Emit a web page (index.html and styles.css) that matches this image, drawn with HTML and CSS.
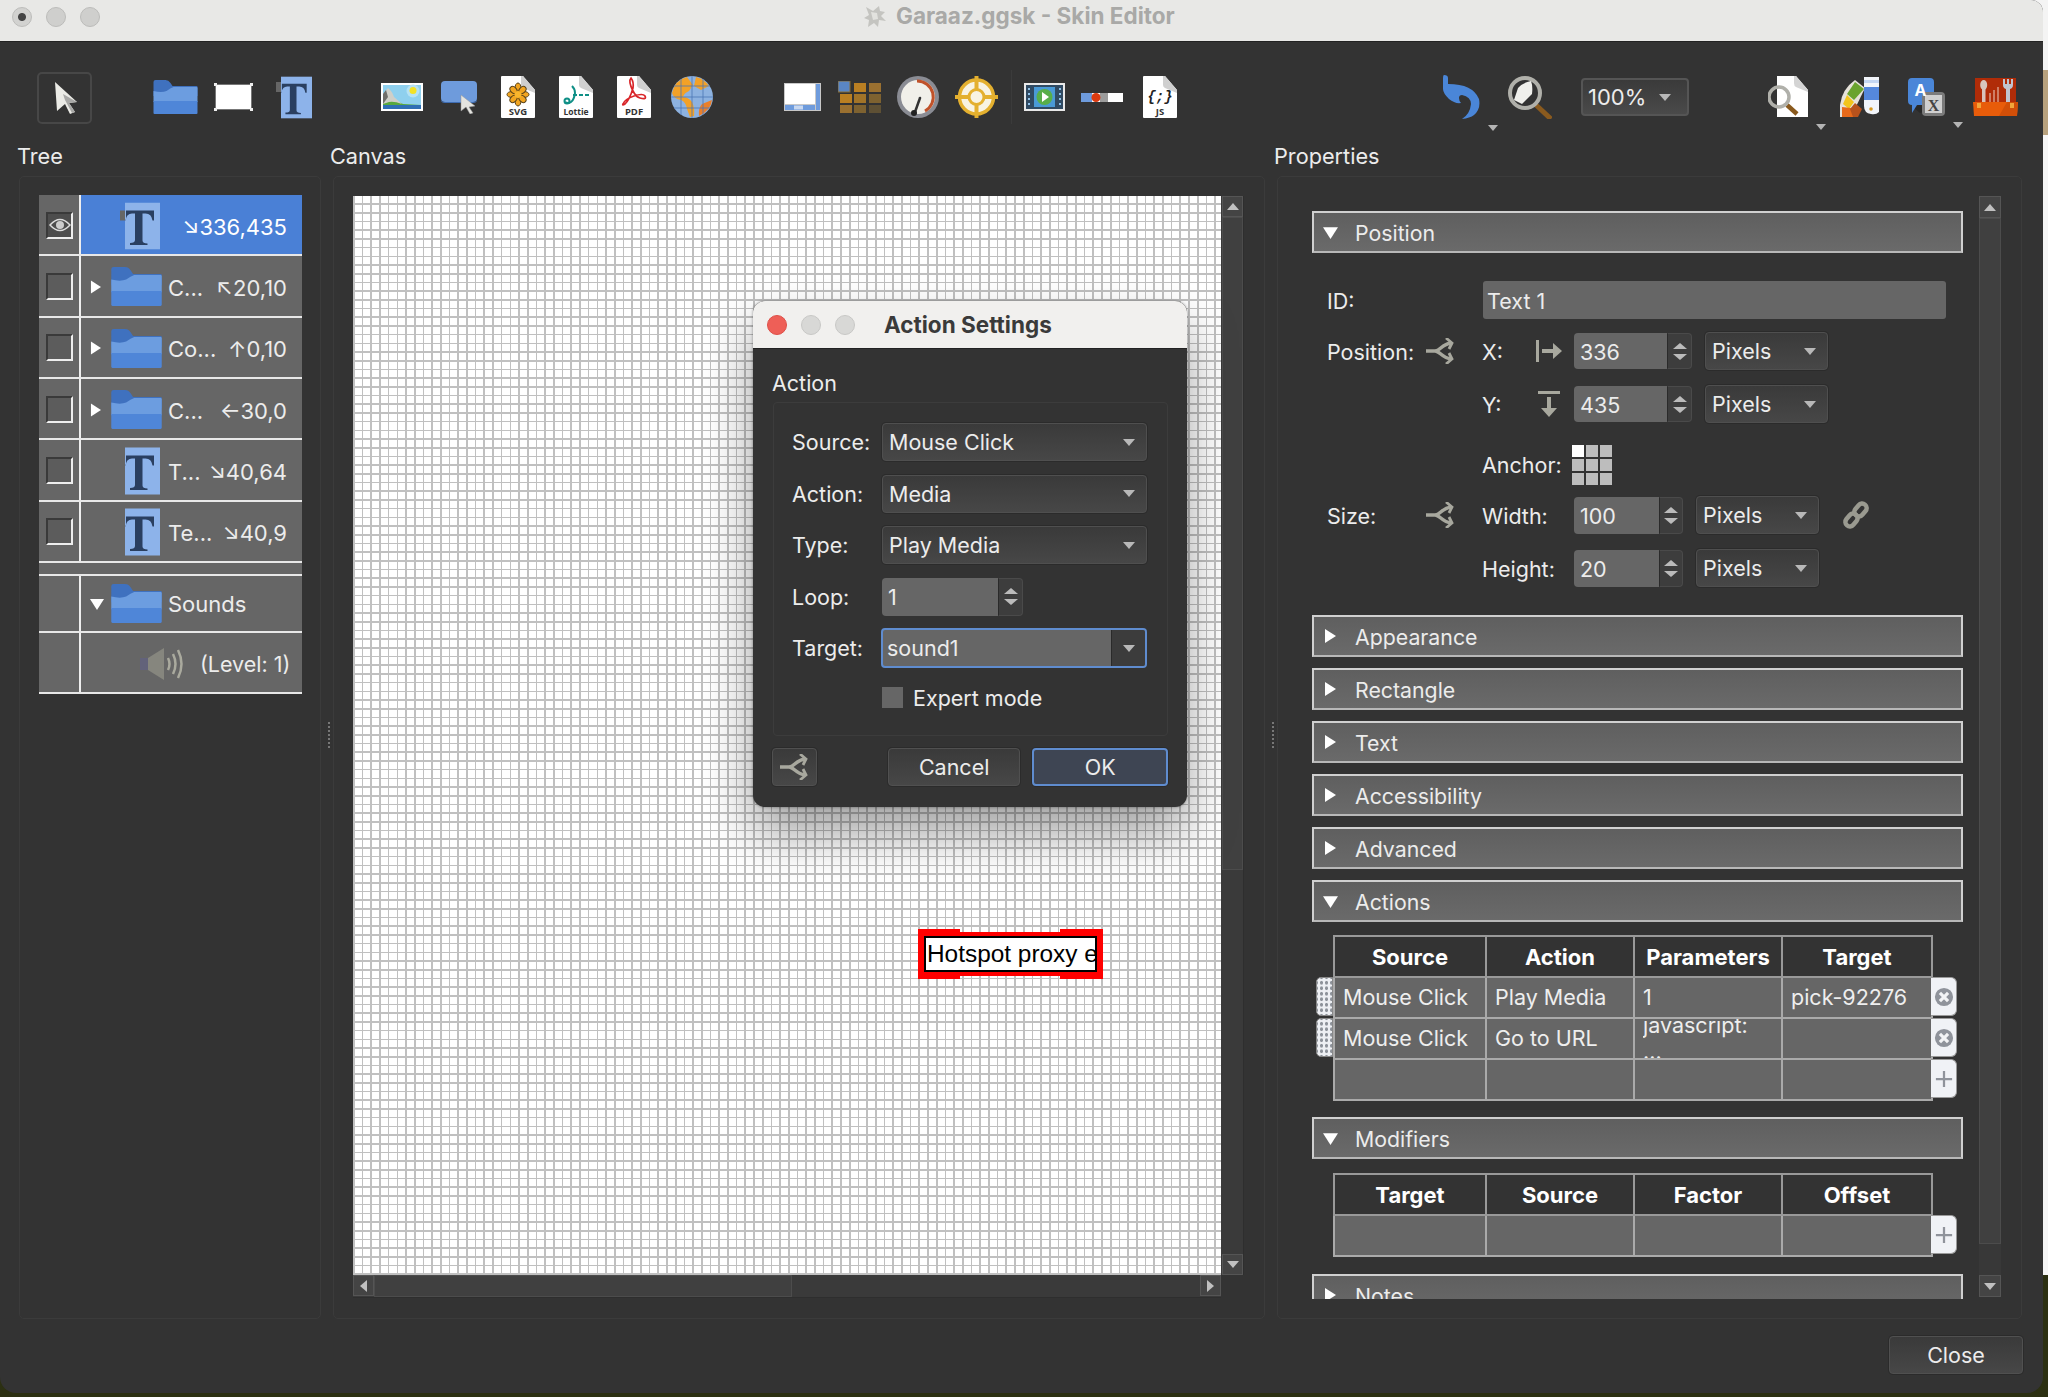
FILE: index.html
```html
<!DOCTYPE html>
<html lang="en">
<head>
<meta charset="utf-8">
<title>Garaaz.ggsk - Skin Editor</title>
<link rel="stylesheet" href="styles.css">
</head>
<body>
<svg class="defs" xmlns="http://www.w3.org/2000/svg">
  <symbol id="i-folder" viewBox="0 0 44 34">
    <path fill="#3f71bf" d="M0 2Q0 0 2 0h10q3 0 5 3l2 3h24q1 0 1 1v9H0z"/>
    <path fill="#6c9de0" d="M0 11q8 2 13 0 4-3 7-4h23q1 0 1 1v14H0z"/>
    <path fill="#4f86d8" d="M0 21h44v12q0 1-1 1H1q-1 0-1-1z"/>
  </symbol>
  <symbol id="i-text" viewBox="0 0 35 47">
    <rect width="35" height="47" fill="#8db3ea"/>
    <path fill="#2a3f60" d="M1 8h28v10h-1.500q-1-7-7-7h-3v27q0 3 5 3v1.500H5V40.500q5 0 5-3V11H7q-5.500 0-6.500 7H1z"/>
  </symbol>
  <symbol id="i-shuffle" viewBox="0 0 28 26">
    <path fill="none" stroke="#a8a89e" stroke-width="3.500" stroke-linejoin="round" d="M0 13h9C14 13 16 6 25 5M9 13C14 13 16 20 25 21"/>
    <path fill="none" stroke="#a8a89e" stroke-width="2.800" d="M20 0l6 5-3 6M20 26l6-5-3-6"/>
  </symbol>
  <symbol id="i-tri-right" viewBox="0 0 12 14"><path fill="#fff" d="M1 0l11 7-11 7z"/></symbol>
  <symbol id="i-tri-down" viewBox="0 0 14 12"><path fill="#fff" d="M0 1h14L7 12z"/></symbol>
  <symbol id="i-remove" viewBox="0 0 22 22">
    <circle cx="11" cy="11" r="10" fill="#8f939b"/>
    <path stroke="#f2f3f5" stroke-width="3.500" d="M6.500 6.500l9 9M15.500 6.500l-9 9"/>
  </symbol>
  <symbol id="i-plus" viewBox="0 0 20 20"><path stroke="#8f939b" stroke-width="2.500" d="M10 1v18M1 10h18"/></symbol>
  <symbol id="i-page" viewBox="0 0 34 42">
    <path fill="#fff" d="M1 0h21l12 14v27q0 1-1 1H1q-1 0-1-1V1q0-1 1-1z"/>
    <path fill="#cfcfcf" d="M20 0h2l12 14v3L22 12q-2-1-2-3z"/>
  </symbol>
</svg>

<div class="window">
  <header class="titlebar">
    <span class="light light-dot"></span>
    <span class="light"></span>
    <span class="light"></span>
    <div class="win-title">
      <svg class="win-icon" viewBox="0 0 24 24"><path fill="#c4c4c0" d="M3 3l7 4 6-5 1 5 5 1-4 4 5 5-7-1-1 7-4-4-6 4 1-7-5-2 5-3z"/><path fill="#e2e2de" d="M8 8l6 1 1 6-5 1z"/></svg>
      <span>Garaaz.ggsk - Skin Editor</span>
    </div>
  </header>

  <div class="toolbar">
    <button class="pointer-tool">
      <svg width="24" height="32" viewBox="0 0 24 32"><path fill="#ebebe6" d="M1 0l22 20-8 1 6 9-5 2-5-10-8 7z"/><path fill="#a8a8a6" d="M9 12l14 8-8 1 6 9-3 1-7-13z"/></svg>
    </button>
    <svg class="t-folder"><use href="#i-folder"/></svg>
    <svg class="t-rect" viewBox="0 0 39 28">
      <rect x="1.500" y="1.500" width="36" height="25" fill="#fff" stroke="#777" rx="1"/>
      <path fill="#eee" d="M0 0h3v3H0zM36 0h3v3h-3zM0 25h3v3H0zM36 25h3v3h-3z"/>
    </svg>
    <svg class="t-text" viewBox="0 0 36 43"><rect y="6" width="6" height="10" fill="#666"/><use href="#i-text" x="5" width="31" height="43"/></svg>
    <svg class="t-image" viewBox="0 0 42 28">
      <rect width="42" height="28" fill="#fff"/>
      <rect x="2" y="2" width="38" height="24" fill="#8fd0ee"/>
      <circle cx="32" cy="8" r="6.500" fill="#b6e2f4"/><circle cx="32" cy="7.500" r="3.500" fill="#f4e224"/>
      <path fill="#58a83e" d="M2 17q10-1 20 4l18 1v2H2z"/>
      <path fill="#cfcfc8" d="M2 21V11l5-6q4 3 6 9l8 7q-8-3-13-2z"/>
      <path fill="#6e6e6a" d="M2 21V11l3-4 2 7z"/>
      <path fill="#2f6fb4" d="M2 22h38v4H2z"/>
    </svg>
    <svg class="t-hotspot" viewBox="0 0 38 33">
      <rect width="36" height="21" rx="4" fill="#6e9bdc"/><path fill="#3f6db3" d="M0 18q0 3 4 3h28q4 0 4-3v1q0 3-4 3H4q-4 0-4-3z"/>
      <path fill="#e4e4e0" stroke="#999" stroke-width=".5" d="M20 14l14 11-6 1 4 6-3 1-4-7-5 4z"/>
    </svg>
    <svg class="t-doc" viewBox="0 0 34 42"><use href="#i-page" width="34" height="42"/>
      <g fill="#f2a521" stroke="#57421a" stroke-width="1"><ellipse cx="17" cy="12" rx="3" ry="5"/><ellipse cx="17" cy="25" rx="3" ry="5"/><ellipse cx="11" cy="18.500" rx="5" ry="3"/><ellipse cx="23" cy="18.500" rx="5" ry="3"/><ellipse cx="12.500" cy="14" rx="3" ry="4" transform="rotate(-45 12.500 14)"/><ellipse cx="21.500" cy="14" rx="3" ry="4" transform="rotate(45 21.500 14)"/><ellipse cx="12.500" cy="23" rx="3" ry="4" transform="rotate(45 12.500 23)"/><ellipse cx="21.500" cy="23" rx="3" ry="4" transform="rotate(-45 21.500 23)"/></g>
      <circle cx="17" cy="18.500" r="3.500" fill="#f9b52c"/>
      <text class="doc-label" x="17" y="39">SVG</text>
    </svg>
    <svg class="t-doc t-gap" viewBox="0 0 34 42"><use href="#i-page" width="34" height="42"/>
      <path fill="none" stroke="#0f8f86" stroke-width="2" d="M6 26q3 2 6 0t4-9q0-4-3-7"/><path fill="none" stroke="#0f8f86" stroke-width="2" stroke-dasharray="4 2" d="M14 19h16"/><circle cx="8" cy="25" r="2.500" fill="none" stroke="#0f8f86" stroke-width="2"/>
      <text class="doc-label doc-label-sm" x="17" y="39">Lottie</text>
    </svg>
    <svg class="t-doc t-gap" viewBox="0 0 34 42"><use href="#i-page" width="34" height="42"/>
      <path fill="none" stroke="#d9262a" stroke-width="1.700" d="M14 2q-3 3 2 13 3 6 7 7 7 2 5-2-2-3-11 0-9 3-11 8-1 2 2 0 5-5 8-16 1-6-2-10z"/>
      <text class="doc-label" x="17" y="39">PDF</text>
    </svg>
    <svg class="t-globe" viewBox="0 0 42 42">
      <circle cx="21" cy="21" r="21" fill="#8db2e0"/>
      <path fill="#f2a127" d="M16 1Q4 4 1 17q2 6 9 7 5 2 6 9l3 8 4-1q1-8-2-14-4-5-9-5 1-4 6-6l4-6z"/>
      <path fill="#ea7f2a" d="M41 24q-1 10-13 16-1-8 3-12z"/><path fill="#f2a127" d="M25 1q8 2 13 9l-8 4-7-4z"/>
      <path fill="none" stroke="#4b77b5" stroke-width="1" d="M21 0v42M10 3v36M32 3v36M3 10h36M0 21h42M3 32h36" opacity=".8"/>
    </svg>
    <svg class="t-scroll" viewBox="0 0 37 28">
      <rect width="37" height="28" fill="#c8c8c8"/><rect x="1" y="1" width="30" height="20" fill="#fff"/>
      <rect x="32" y="1" width="4" height="26" fill="#6e9bdc"/><rect x="1" y="22" width="30" height="5" fill="#6e9bdc"/><rect x="10" y="22.500" width="9" height="4" fill="#c8d8f0"/>
    </svg>
    <svg class="t-grid" viewBox="0 0 43 32">
      <rect x="0" y="0" width="12" height="11" fill="#5a86c4" stroke="#8a6d32"/><rect x="16" y="2" width="12" height="9" fill="#ba7f22"/><rect x="31" y="2" width="12" height="9" fill="#9a7030"/>
      <rect x="2" y="13" width="12" height="9" fill="#ba7f22"/><rect x="16" y="13" width="12" height="9" fill="#a27428"/><rect x="31" y="13" width="12" height="9" fill="#7e6230"/>
      <rect x="2" y="24" width="12" height="8" fill="#9a7030"/><rect x="16" y="24" width="12" height="8" fill="#7e6230"/><rect x="31" y="24" width="12" height="8" fill="#5e5034"/>
    </svg>
    <svg class="t-gauge" viewBox="0 0 42 42">
      <circle cx="21" cy="21" r="21" fill="#8a8c94"/><circle cx="21" cy="21" r="17" fill="#f1f0ea"/>
      <path fill="none" stroke="#c0522a" stroke-width="3" d="M20 5a16 16 0 0 1 8 30"/>
      <path stroke="#333" stroke-width="2.500" stroke-linecap="round" d="M18 36L23 22"/><circle cx="17" cy="37" r="3" fill="#222"/>
    </svg>
    <svg class="t-cross" viewBox="0 0 43 42">
      <circle cx="21.500" cy="21" r="17" fill="#f8f3e2" stroke="#e4b02f" stroke-width="3.500"/>
      <path fill="none" stroke="#e4b02f" stroke-width="4" d="M0 21h14M29 21h14M21.500 0v14M21.500 28v14"/>
      <circle cx="21.500" cy="21" r="7.500" fill="#f8f3e2" stroke="#e4b02f" stroke-width="3"/>
    </svg>
    <span class="tool-sep"></span>
    <svg class="t-video" viewBox="0 0 41 28">
      <rect width="41" height="28" fill="#e9e9e9"/><rect x="2" y="2" width="37" height="24" fill="#304a62"/>
      <path fill="#8ec0e8" d="M4 5h2v2H4zM4 10h2v2H4zM4 15h2v2H4zM4 20h2v2H4zM35 5h2v2h-2zM35 10h2v2h-2zM35 15h2v2h-2zM35 20h2v2h-2z"/>
      <rect x="10" y="4" width="21" height="20" fill="#4a9ad6"/><circle cx="20.500" cy="14" r="8" fill="#58ae4a"/><path fill="#fff" d="M18 9l7 5-7 5z"/>
    </svg>
    <svg class="t-slider" viewBox="0 0 42 9">
      <rect width="42" height="9" fill="#fff"/><rect width="11" height="9" fill="#6e9bdc"/><rect x="19" width="8" height="9" fill="#9c9c9c"/><circle cx="15" cy="4.500" r="4.500" fill="#dc3a10"/>
    </svg>
    <svg class="t-doc t-js" viewBox="0 0 34 42"><use href="#i-page" width="34" height="42"/>
      <text class="doc-code" x="17" y="25">{;}</text>
      <text class="doc-label" x="17" y="39">JS</text>
    </svg>

    <div class="tool-wrap t-undo">
      <svg width="37" height="44" viewBox="0 0 37 44"><path fill="#4a86d8" d="M1 0q4 0 4 3v6Q30 9 36 24q2 10-5 16-4 3-12 4 8-5 9-15 0-7-9-9-3 0-3 3 0 3 2 5-6 1-12-4Q0 18 0 14V3q0-3 1-3z"/></svg>
      <span class="menu-caret"></span>
    </div>
    <svg class="t-lens" viewBox="0 0 44 43">
      <path stroke="#8a5a1e" stroke-width="5" d="M28 29l15 14"/>
      <circle cx="17" cy="17" r="15" fill="#333" stroke="#b0b0aa" stroke-width="4"/>
      <path fill="#f0f0ec" d="M6 24l4-12q4-5 13-7 2 5 1 13l-10 10z"/>
    </svg>
    <div class="zoom-select"><span>100%</span><i class="caret"></i></div>
    <div class="tool-wrap t-docsearch">
      <svg width="40" height="42" viewBox="0 0 40 42">
        <path fill="#fff" d="M9 0h19l12 14v27H9z"/><path fill="#d4d4d4" d="M26 0h2l12 14v2L28 11q-2-1-2-4z"/>
        <path stroke="#8a5a1e" stroke-width="4.500" d="M19 29l10 9"/><circle cx="11" cy="21" r="10" fill="none" stroke="#b0b0aa" stroke-width="3.500"/>
      </svg>
      <span class="menu-caret"></span>
    </div>
    <svg class="t-palette" viewBox="0 0 41 40">
      <path fill="#e6e2da" d="M1 40V28Q3 12 16 3l10 8-14 29z"/>
      <path fill="#6aa32e" d="M8 17L16 5l9 7-10 11z"/><path fill="#f2c51c" d="M4 27l4-9 7 7-5 7z"/><path fill="#e86a1a" d="M3 40v-10l9 1 3 9z"/><path fill="#b7521c" d="M11 32l5-6 7 6-4 8h-5z"/>
      <path fill="#f2f5fa" d="M25 0h15v35q-3 3-8 2-7-1-7-8z"/><rect x="25" y="10" width="15" height="13" fill="#5588dc"/><rect x="25" y="3" width="15" height="3" fill="#c4d6f2"/><circle cx="32" cy="32" r="1.800" fill="#d89a20"/>
    </svg>
    <div class="tool-wrap t-translate">
      <svg width="37" height="38" viewBox="0 0 37 38">
        <path fill="#222" d="M6 30l8-6 6 8-8 3z" opacity=".6"/>
        <path fill="#4a86d8" d="M4 0h18q4 0 4 4v19q0 4-4 4H9l-5 8v-8q-4 0-4-4V4q0-4 4-4z"/>
        <rect x="14" y="14" width="23" height="24" rx="4" fill="#7b7b7b"/><rect x="17" y="17" width="17" height="18" fill="#d0d0d0"/>
        <text class="trans-a" x="12.500" y="18">A</text><text class="trans-x" x="25.500" y="33">X</text>
      </svg>
      <span class="menu-caret"></span>
    </div>
    <svg class="t-toolbox" viewBox="0 0 45 38">
      <rect x="2" width="41" height="25" fill="#b02c08"/>
      <path fill="#e85c0a" d="M0 24h45l-1 14H1z"/><path fill="#d24f08" d="M26 38l8-14h11l-1 14z"/>
      <path fill="#f2a63a" d="M4 25h4v5H4zM37 25h4v5h-4z"/>
      <rect x="9" y="6" width="3.500" height="18" fill="#d8c4bc"/><ellipse cx="10.700" cy="7" rx="3.500" ry="5" fill="#d8c4bc"/>
      <path stroke="#d89a84" stroke-width="1.500" d="M17 24v-9M21 24v-12M25 24V9"/>
      <path fill="#c0c4d0" d="M30 1v6q0 3 3 4v13h4V11q3-1 3-4V1l-2 0v5h-2V1h-2v5h-2V1z"/>
    </svg>
  </div>

  <main class="workspace">
    <h2 class="pane-label pane-label-tree">Tree</h2>
    <h2 class="pane-label">Canvas</h2>
    <h2 class="pane-label">Properties</h2>

    <section class="panel panel-tree">
      <div class="tree">
        <div class="tree-row is-selected">
          <div class="tree-check"><span class="check check-eye">
            <svg width="22" height="14" viewBox="0 0 22 14"><path fill="none" stroke="#ddd" stroke-width="1.500" d="M1 7q10-11 20 0-10 11-20 0z"/><circle cx="11" cy="7" r="4" fill="#ccc"/></svg>
          </span></div>
          <div class="tree-main">
            <span class="tree-arrow"></span>
            <span class="tree-icon tree-icon-handle"><svg class="tree-t" viewBox="0 0 40 47"><rect y="8" width="6" height="10" fill="#666"/><use href="#i-text" x="5" width="35" height="47"/></svg></span>
            <span class="tree-pos tree-pos-strong">↘336,435</span>
          </div>
        </div>
        <div class="tree-row">
          <div class="tree-check"><span class="check"></span></div>
          <div class="tree-main">
            <span class="tree-arrow"><svg width="11" height="14"><use href="#i-tri-right"/></svg></span>
            <span class="tree-icon"><svg class="tree-folder"><use href="#i-folder"/></svg></span>
            <span class="tree-name">C...</span><span class="tree-pos">↖20,10</span>
          </div>
        </div>
        <div class="tree-row">
          <div class="tree-check"><span class="check"></span></div>
          <div class="tree-main">
            <span class="tree-arrow"><svg width="11" height="14"><use href="#i-tri-right"/></svg></span>
            <span class="tree-icon"><svg class="tree-folder"><use href="#i-folder"/></svg></span>
            <span class="tree-name">Co...</span><span class="tree-pos">↑0,10</span>
          </div>
        </div>
        <div class="tree-row">
          <div class="tree-check"><span class="check"></span></div>
          <div class="tree-main">
            <span class="tree-arrow"><svg width="11" height="14"><use href="#i-tri-right"/></svg></span>
            <span class="tree-icon"><svg class="tree-folder"><use href="#i-folder"/></svg></span>
            <span class="tree-name">C...</span><span class="tree-pos">←30,0</span>
          </div>
        </div>
        <div class="tree-row">
          <div class="tree-check"><span class="check"></span></div>
          <div class="tree-main">
            <span class="tree-arrow"></span>
            <span class="tree-icon tree-icon-text"><svg class="tree-t-plain"><use href="#i-text"/></svg></span>
            <span class="tree-name">T...</span><span class="tree-pos">↘40,64</span>
          </div>
        </div>
        <div class="tree-row">
          <div class="tree-check"><span class="check"></span></div>
          <div class="tree-main">
            <span class="tree-arrow"></span>
            <span class="tree-icon tree-icon-text"><svg class="tree-t-plain"><use href="#i-text"/></svg></span>
            <span class="tree-name">Te...</span><span class="tree-pos">↘40,9</span>
          </div>
        </div>
        <div class="tree-spacer"></div>
        <div class="tree-row tree-row-sounds">
          <div class="tree-check"></div>
          <div class="tree-main">
            <span class="tree-arrow"><svg width="14" height="12"><use href="#i-tri-down"/></svg></span>
            <span class="tree-icon"><svg class="tree-folder"><use href="#i-folder"/></svg></span>
            <span class="tree-name">Sounds</span>
          </div>
        </div>
        <div class="tree-row">
          <div class="tree-check"></div>
          <div class="tree-main tree-main-sound">
            <svg width="44" height="34" viewBox="0 0 44 34"><rect y="11" width="9" height="12" fill="#62627a"/><path fill="#86867e" d="M8 11l16-10v32L8 23z"/><path fill="none" stroke="#aaaa9e" stroke-width="2.500" d="M28 11q3 6 0 12M33 7q5 10 0 20M38 3q7 14 0 28"/></svg>
            <span class="tree-level">(Level: 1)</span>
          </div>
        </div>
      </div>
    </section>

    <section class="panel panel-canvas">
      <div class="canvas-area">
        <div class="canvas-surface">
          <div class="proxy"><div class="proxy-text">Hotspot proxy e</div></div>

          <div class="dialog">
            <div class="dialog-title">
              <span class="light light-red"></span><span class="light light-soft"></span><span class="light light-soft"></span>
              <strong>Action Settings</strong>
            </div>
            <div class="dialog-body">
              <div class="group-label">Action</div>
              <div class="group">
                <div class="form-row"><label>Source:</label><div class="select select-wide"><span>Mouse Click</span><i class="caret"></i></div></div>
                <div class="form-row"><label>Action:</label><div class="select select-wide"><span>Media</span><i class="caret"></i></div></div>
                <div class="form-row"><label>Type:</label><div class="select select-wide"><span>Play Media</span><i class="caret"></i></div></div>
                <div class="form-row"><label>Loop:</label><div class="spin spin-loop"><span class="spin-value">1</span><span class="stepper"><i class="up"></i><i class="down"></i></span></div></div>
                <div class="form-row"><label>Target:</label><div class="combo"><span class="combo-value">sound1</span><span class="combo-btn"><i class="caret"></i></span></div></div>
                <div class="form-row form-row-check"><label></label><span class="plain-check"></span><span>Expert mode</span></div>
              </div>
              <div class="dialog-buttons">
                <button class="btn btn-icon"><svg width="28" height="26"><use href="#i-shuffle"/></svg></button>
                <button class="btn btn-cancel">Cancel</button>
                <button class="btn btn-ok">OK</button>
              </div>
            </div>
          </div>
        </div>
        <div class="vscroll">
          <span class="sb-btn"><i class="up"></i></span>
          <span class="sb-thumb sb-thumb-canvas"></span>
          <span class="sb-fill"></span>
          <span class="sb-btn"><i class="down"></i></span>
        </div>
        <div class="hscroll">
          <span class="sb-btn"><i class="left"></i></span>
          <span class="sb-thumb sb-thumb-h"></span>
          <span class="sb-fill"></span>
          <span class="sb-btn"><i class="right"></i></span>
        </div>
      </div>
    </section>

    <section class="panel panel-props">
      <div class="props-scroll">
        <div class="sec"><svg width="15" height="13"><use href="#i-tri-down"/></svg><span>Position</span></div>
        <div class="pos-body">
          <div class="prop-row"><label class="l-main">ID:</label><span class="id-field">Text 1</span></div>
          <div class="prop-row pr-x">
            <label class="l-main">Position:</label>
            <svg class="shuffle"><use href="#i-shuffle"/></svg>
            <label class="l-sub">X:</label>
            <svg class="axis" viewBox="0 0 26 26"><path fill="#a8a89e" d="M0 2h3v22H0zM6 11h11V5l9 8-9 8v-6H6z"/></svg>
            <div class="spin spin-pos"><span class="spin-value">336</span><span class="stepper"><i class="up"></i><i class="down"></i></span></div>
            <div class="select select-unit"><span>Pixels</span><i class="caret"></i></div>
          </div>
          <div class="prop-row pr-y">
            <label class="l-main"></label>
            <span class="shuffle"></span>
            <label class="l-sub">Y:</label>
            <svg class="axis" viewBox="0 0 26 26"><path fill="#a8a89e" d="M2 0h22v3H2zM11 6v11H5l8 9 8-9h-6V6z"/></svg>
            <div class="spin spin-pos"><span class="spin-value">435</span><span class="stepper"><i class="up"></i><i class="down"></i></span></div>
            <div class="select select-unit"><span>Pixels</span><i class="caret"></i></div>
          </div>
          <div class="prop-row pr-anchor">
            <label class="l-main"></label>
            <span class="shuffle"></span>
            <label class="l-anchor">Anchor:</label>
            <div class="anchor"><i class="on"></i><i></i><i></i><i></i><i></i><i></i><i></i><i></i><i></i></div>
          </div>
          <div class="prop-row pr-size">
            <label class="l-main">Size:</label>
            <svg class="shuffle"><use href="#i-shuffle"/></svg>
            <label class="l-dim">Width:</label>
            <div class="spin spin-size"><span class="spin-value">100</span><span class="stepper"><i class="up"></i><i class="down"></i></span></div>
            <div class="select select-unit select-unit-size"><span>Pixels</span><i class="caret"></i></div>
            <svg class="link" viewBox="0 0 28 28"><g fill="none" stroke="#9a9a90" stroke-width="4.500"><rect x="14" y="2" width="9" height="14" rx="4.500" transform="rotate(40 18.500 9)"/><rect x="5" y="12" width="9" height="14" rx="4.500" transform="rotate(40 9.500 19)"/></g></svg>
          </div>
          <div class="prop-row pr-height">
            <label class="l-main"></label>
            <span class="shuffle"></span>
            <label class="l-dim">Height:</label>
            <div class="spin spin-size"><span class="spin-value">20</span><span class="stepper"><i class="up"></i><i class="down"></i></span></div>
            <div class="select select-unit select-unit-size"><span>Pixels</span><i class="caret"></i></div>
          </div>
        </div>
        <div class="sec sec-closed"><svg width="12" height="14"><use href="#i-tri-right"/></svg><span>Appearance</span></div>
        <div class="sec sec-closed"><svg width="12" height="14"><use href="#i-tri-right"/></svg><span>Rectangle</span></div>
        <div class="sec sec-closed"><svg width="12" height="14"><use href="#i-tri-right"/></svg><span>Text</span></div>
        <div class="sec sec-closed"><svg width="12" height="14"><use href="#i-tri-right"/></svg><span>Accessibility</span></div>
        <div class="sec sec-closed"><svg width="12" height="14"><use href="#i-tri-right"/></svg><span>Advanced</span></div>
        <div class="sec sec-actions"><svg width="15" height="13"><use href="#i-tri-down"/></svg><span>Actions</span></div>

        <div class="table-wrap table-actions">
          <table class="data">
            <colgroup><col class="c1"><col class="c2"><col class="c3"><col class="c4"></colgroup>
            <thead><tr><th>Source</th><th>Action</th><th>Parameters</th><th>Target</th></tr></thead>
            <tbody>
              <tr><td>Mouse Click</td><td>Play Media</td><td>1</td><td>pick-92276</td></tr>
              <tr><td>Mouse Click</td><td>Go to URL</td><td class="cell-multi"><div class="multi">javascript:<br>...</div></td><td></td></tr>
              <tr><td></td><td></td><td></td><td></td></tr>
            </tbody>
          </table>
          <span class="grip grip-1"></span><span class="grip grip-2"></span>
          <span class="row-btn rb-1"><svg width="20" height="20"><use href="#i-remove"/></svg></span>
          <span class="row-btn rb-2"><svg width="20" height="20"><use href="#i-remove"/></svg></span>
          <span class="row-btn rb-3"><svg width="18" height="18"><use href="#i-plus"/></svg></span>
        </div>

        <div class="sec sec-mod"><svg width="15" height="13"><use href="#i-tri-down"/></svg><span>Modifiers</span></div>
        <div class="table-wrap table-mods">
          <table class="data">
            <colgroup><col class="c1"><col class="c2"><col class="c3"><col class="c4"></colgroup>
            <thead><tr><th>Target</th><th>Source</th><th>Factor</th><th>Offset</th></tr></thead>
            <tbody><tr><td></td><td></td><td></td><td></td></tr></tbody>
          </table>
          <span class="row-btn rb-m"><svg width="18" height="18"><use href="#i-plus"/></svg></span>
        </div>
        <div class="sec sec-notes"><svg width="12" height="14"><use href="#i-tri-right"/></svg><span>Notes</span></div>
      </div>
      <div class="vscroll vscroll-props">
        <span class="sb-btn"><i class="up"></i></span>
        <span class="sb-thumb sb-thumb-props"></span>
        <span class="sb-fill"></span>
        <span class="sb-btn"><i class="down"></i></span>
      </div>
    </section>
  </main>

  <footer class="footer"><button class="btn btn-close">Close</button></footer>
</div>
</body>
</html>
```
FILE: styles.css
```css
* { box-sizing: border-box; }
html, body { margin: 0; padding: 0; }
body {
  width: 2048px; height: 1397px; overflow: hidden;
  font-family: Inter, "Liberation Sans", sans-serif;
  font-size: 21.5px; color: #ececec;
  background: linear-gradient(180deg, #f4f4f4 0 70px, #b8a27e 70px 135px, #f6f6f6 135px 1275px, #2c3012 1275px 100%);
}
.defs { position: absolute; width: 0; height: 0; }
svg { display: block; flex: none; }
button { font: inherit; color: inherit; }

.window {
  width: 2043px; height: 1393px; background: #333; overflow: hidden;
  border-radius: 0 12px 16px 16px; display: flex; flex-direction: column;
}

/* title bar */
.titlebar {
  height: 42px; background: #e8e8e6; border-bottom: 1px solid #222; flex: none;
  display: flex; align-items: center; padding: 0 0 7px 12px; gap: 14px;
}
.light {
  width: 20px; height: 20px; border-radius: 50%; background: #cfcfcd; border: 1px solid #bcbcba;
  display: block; flex: none;
}
.light-dot { background: radial-gradient(circle, #444 0 3.5px, #d2d2d0 4.5px); }
.win-title {
  margin-left: 749px; display: flex; align-items: center; gap: 9px; padding-bottom: 3px;
  font-weight: 700; font-size: 22.5px; color: #a9a9a7; white-space: nowrap;
}
.win-icon { width: 24px; height: 24px; }

/* toolbar */
.toolbar {
  height: 102px; padding: 8px 0 0 37px; display: flex; align-items: center; flex: none;
}
.pointer-tool {
  width: 55px; height: 52px; background: #333; border: 2px solid #474747; border-radius: 5px;
  display: flex; align-items: center; justify-content: center; padding: 0 0 0 3px; margin-top: 2px;
}
.t-folder { width: 45px; height: 34px; margin-left: 61px; }
.t-rect { width: 39px; height: 28px; margin-left: 16px; }
.t-text { width: 36px; height: 43px; margin-left: 23px; }
.t-image { width: 42px; height: 28px; margin-left: 69px; }
.t-hotspot { width: 38px; height: 33px; margin-left: 18px; }
.t-doc { width: 34px; height: 42px; margin-left: 22px; }
.t-gap { margin-left: 24px; }
.t-globe { width: 42px; height: 42px; margin-left: 20px; }
.t-scroll { width: 37px; height: 28px; margin-left: 71px; }
.t-grid { width: 43px; height: 32px; margin-left: 17px; }
.t-gauge { width: 42px; height: 42px; margin-left: 16px; }
.t-cross { width: 43px; height: 42px; margin-left: 16px; }
.tool-sep { width: 1px; height: 54px; background: #3b3b3b; margin-left: 13px; flex: none; }
.t-video { width: 41px; height: 28px; margin-left: 12px; }
.t-slider { width: 42px; height: 9px; margin-left: 16px; }
.t-js { margin-left: 20px; }
.tool-wrap { position: relative; display: flex; }
.t-undo { margin-left: 266px; }
.t-lens { width: 44px; height: 43px; margin-left: 28px; }
.zoom-select {
  width: 108px; height: 38px; margin-left: 29px; border-radius: 4px; border: 2px solid #555;
  background: linear-gradient(180deg, #3a3a3a, #4a4a4a);
  display: flex; align-items: center; justify-content: space-between; padding: 0 16px 0 5px; font-size: 22px;
}
.t-docsearch { margin-left: 79px; }
.t-palette { width: 41px; height: 40px; margin-left: 31px; }
.t-translate { margin-left: 28px; }
.t-toolbox { width: 45px; height: 38px; margin-left: 28px; }
.menu-caret {
  position: absolute; right: -18px; bottom: -12px; width: 0; height: 0;
  border-left: 5px solid transparent; border-right: 5px solid transparent; border-top: 6px solid #b4b4b4;
}
.caret {
  display: block; width: 0; height: 0; flex: none;
  border-left: 6.5px solid transparent; border-right: 6.5px solid transparent; border-top: 7px solid #b8b8b8;
}
.doc-label { font: 700 9.500px "Open Sans", sans-serif; fill: #333; text-anchor: middle; }
.doc-label-sm { font-size: 8.500px; }
.doc-code { font: italic 700 14px "Liberation Mono", monospace; fill: #222; text-anchor: middle; }
.trans-a { font: 700 16px Inter, sans-serif; fill: #fff; text-anchor: middle; }
.trans-x { font: 700 16px "Liberation Serif", serif; fill: #444; text-anchor: middle; }

/* workspace */
.workspace {
  display: grid; padding-left: 19px;
  grid-template-columns: 302px 932px 745px; column-gap: 12px;
  grid-template-rows: 32px 1143px; flex: none;
}
.pane-label { margin: 0 0 0 -3px; font: inherit; font-size: 21.7px; line-height: 25px; font-weight: 400; }
.pane-label-tree { margin-left: -2px; }
.panel { border: 1px solid #3b3b3b; border-radius: 5px; position: relative; }
.panel-tree::after, .panel-props::before {
  content: ""; position: absolute; top: 544px; width: 4px; height: 28px;
  background: radial-gradient(circle, #777 0 1px, transparent 1.3px) 0 0 / 4px 4px;
}
.panel-tree::after { right: -11px; }
.panel-props::before { left: -7px; }

/* tree */
.panel-tree { padding: 18px 0 0 19px; }
.tree { width: 263px; }
.tree-row { display: flex; height: 61.33px; background: #666; border-bottom: 2px solid #e8e8e8; }
.tree-row-sounds { height: 58.5px; border-top: 2px solid #e8e8e8; }
.tree-check {
  width: 42px; flex: none; border-right: 2px solid #eee;
  padding-left: 7px; display: flex; align-items: center;
}
.tree-spacer { height: 11.5px; background: #666; }
.check {
  width: 27px; height: 27px; background: #5c5c5c; margin-top: 1px;
  border-top: 2px solid #3a3a3a; border-left: 2px solid #3a3a3a;
  border-right: 2px solid #eee; border-bottom: 2px solid #eee;
  display: flex; align-items: center; justify-content: center;
}
.check-eye { background: #4d4d4d; }
.tree-main { flex: 1; display: flex; align-items: center; min-width: 0; padding: 2px 15px 0 0; }
.tree-row-sounds .tree-main { padding-top: 0; }
.is-selected .tree-main { background: #4a80d6; }
.is-selected .tree-main, .is-selected { color: #fff; }
.tree-arrow { width: 30px; flex: none; display: flex; justify-content: flex-start; padding-left: 9px; }
.tree-icon { width: 51px; flex: none; display: flex; }
.tree-icon-text { padding-left: 14px; }
.tree-icon-handle { padding-left: 9px; }
.tree-folder { width: 51px; height: 39px; }
.tree-t { width: 40px; height: 48px; }
.tree-t-plain { width: 35px; height: 48px; }
.tree-name { margin-left: 6px; font-size: 22px; white-space: nowrap; padding-top: 2px; }
.tree-pos { margin-left: auto; font-size: 22px; white-space: nowrap; padding-top: 2px; }
.tree-row-sounds .tree-name { padding-top: 0; }
.tree-main-sound { padding-left: 59px; padding-right: 12px; justify-content: flex-start; gap: 16px; }
.tree-level { font-size: 21.5px; white-space: nowrap; padding-top: 1px; }

/* canvas */
.panel-canvas { padding: 19px 0 0 19px; }
.canvas-area { display: grid; grid-template-columns: 868px 23px; grid-template-rows: 1079px 23px; }
.canvas-surface {
  position: relative; background-color: #fff;
  background-image:
    repeating-linear-gradient(90deg, #c0c0c0 0 1.6px, transparent 1.6px 8.7px),
    repeating-linear-gradient(0deg, #c0c0c0 0 1.6px, transparent 1.6px 8.7px);
}
.vscroll { display: flex; flex-direction: column; background: #3a3a3a; border-right: 1px solid #2e2e2e; padding-left: 1px; }
.hscroll { display: flex; background: #3a3a3a; border-bottom: 1px solid #2e2e2e; grid-column: 1 / 2; }
.sb-btn {
  width: 21px; height: 21px; flex: none; border: 1px solid #555; background: #444;
  display: flex; align-items: center; justify-content: center;
}
.sb-btn i { display: block; width: 0; height: 0; }
.sb-btn .up { border-left: 6.5px solid transparent; border-right: 6.5px solid transparent; border-bottom: 7px solid #c0c0c0; }
.sb-btn .down { border-left: 6.5px solid transparent; border-right: 6.5px solid transparent; border-top: 7px solid #c0c0c0; }
.sb-btn .left { border-top: 6.5px solid transparent; border-bottom: 6.5px solid transparent; border-right: 7px solid #c0c0c0; }
.sb-btn .right { border-top: 6.5px solid transparent; border-bottom: 6.5px solid transparent; border-left: 7px solid #c0c0c0; }
.sb-thumb { background: #404040; border: 1px solid #4c4c4c; flex: none; }
.sb-thumb-canvas { height: 653px; width: 21px; }
.sb-thumb-h { width: 418px; height: 22px; }
.sb-fill { flex: 1; }

.proxy {
  position: absolute; left: 565px; top: 733px; width: 185px; height: 50px;
  background:
    linear-gradient(#f00, #f00) 0 0 / 42px 7px no-repeat,
    linear-gradient(#f00, #f00) 100% 0 / 43px 7px no-repeat,
    linear-gradient(#f00, #f00) 0 100% / 42px 7px no-repeat,
    linear-gradient(#f00, #f00) 100% 100% / 43px 7px no-repeat,
    linear-gradient(#f00, #f00) 0 0 / 7px 100% no-repeat,
    linear-gradient(#f00, #f00) 100% 0 / 7px 100% no-repeat,
    linear-gradient(#f00, #f00) 0 3px / 100% 4px no-repeat,
    linear-gradient(#f00, #f00) 0 43px / 100% 4px no-repeat;
}
.proxy-text {
  position: absolute; left: 6px; top: 7px; width: 173px; height: 36px;
  background: #fff; border: 2px solid #000; overflow: hidden; white-space: nowrap;
  font: 24.4px/32px "Liberation Sans", sans-serif; color: #000; padding-left: 1px;
}

/* dialog */
.dialog {
  position: absolute; left: 400px; top: 105px; width: 434px; height: 506px;
  border-radius: 12px; background: #333;
  box-shadow: 0 26px 50px rgba(0,0,0,.38), 0 0 3px rgba(0,0,0,.4);
}
.dialog-title {
  height: 48px; background: #f1f0ee; border-bottom: 1px solid #222; border-radius: 12px 12px 0 0;
  display: flex; align-items: center; padding-left: 14px; gap: 14px;
}
.dialog-title strong { margin-left: 15px; font-size: 22.5px; font-weight: 700; color: #3a3a3a; white-space: nowrap; }
.light-red { background: #ee5f57; border-color: #de5048; }
.light-soft { background: #d8d8d6; border-color: #c8c8c6; }
.dialog-body { padding: 0 19px 0 20px; }
.group-label { height: 53px; padding-top: 20px; line-height: 29px; margin-left: -1px; }
.group { border: 1px solid #3c3c3c; border-radius: 4px; height: 334px; padding: 20px 20px 0 18px; }
.form-row { display: flex; align-items: center; height: 38px; margin-bottom: 13.5px; }
.form-row label { width: 90px; flex: none; white-space: nowrap; }
.form-row-check { height: 21px; margin-top: 20px; margin-bottom: 0; }
.select {
  height: 38px; border-radius: 4px; border: 1.5px solid #4f4f4f; box-shadow: 0 0 0 1px #2b2b2b;
  background: linear-gradient(180deg, #3a3a3a, #474747);
  display: flex; align-items: center; justify-content: space-between; padding: 0 11px 0 6px;
}
.select-wide { width: 265px; }
.spin { display: flex; height: 38px; }
.spin-value {
  background: #666; display: flex; align-items: center; padding: 1px 0 0 6px; flex: none; border-radius: 4px 0 0 4px;
}
.stepper {
  display: flex; flex-direction: column; align-items: center; justify-content: center; gap: 5px;
  background: #3d3d3d; border: 1px solid #4a4a4a; border-left: 1px solid #2a2a2a; border-radius: 0 4px 4px 0; flex: 1;
}
.stepper i { display: block; width: 0; height: 0; border-left: 7px solid transparent; border-right: 7px solid transparent; }
.stepper .up { border-bottom: 6.5px solid #bbb; }
.stepper .down { border-top: 6.5px solid #bbb; }
.spin-loop { width: 141px; }
.spin-loop .spin-value { width: 116px; }
.combo {
  width: 267px; height: 40px; margin-left: -1px; border: 2px solid #5f8ccf; border-radius: 4px;
  display: flex; background: #666;
}
.combo-value { flex: 1; display: flex; align-items: center; padding-left: 4px; }
.combo-btn { width: 34px; background: #3c3c3c; border-left: 1px solid #2a2a2a; display: flex; align-items: center; justify-content: center; border-radius: 0 2px 2px 0; }
.plain-check { width: 21px; height: 21px; background: #666; flex: none; margin-right: 10px; }
.dialog-buttons { display: flex; margin-top: 12px; margin-left: -1px; }
.btn {
  height: 38px; border-radius: 4px; border: 1.5px solid #505050; box-shadow: 0 0 0 1px #2b2b2b;
  background: linear-gradient(180deg, #3a3a3a, #474747); padding: 0;
}
.btn-icon { width: 45px; display: flex; align-items: center; justify-content: center; }
.btn-cancel { width: 133px; margin-left: 71px; }
.btn-ok { width: 136px; margin-left: 12px; border: 2px solid #5f8ccf; background: #3e4553; }

/* properties */
.panel-props { display: flex; padding: 19px 0 0 34px; }
.props-scroll { width: 651px; height: 1103px; overflow: hidden; padding-top: 15px; flex: none; }
.sec {
  height: 42px; width: 651px; border: 2px solid #d0d0d0; border-bottom-color: #b8b8b8;
  background: linear-gradient(180deg, #5f5f5f, #6a6a6a);
  display: flex; align-items: center; padding-left: 9px;
}
.sec span { margin-left: 17px; font-size: 21.3px; line-height: 26px; padding-top: 1px; }
.sec-closed { margin-bottom: 11px; padding-left: 10px; }
.sec-closed span { margin-left: 19px; }
.sec-actions { margin-bottom: 13px; }
.sec-mod { margin: 16px 0 14px; }
.sec-notes { margin-top: 17px; padding-left: 10px; }
.sec-notes span { margin-left: 19px; }
.pos-body { height: 362px; padding: 28px 0 0 15px; }
.prop-row { display: flex; align-items: center; height: 38px; }
.prop-row label { padding-top: 1px; }
.pr-x { margin-top: 13px; } .pr-y { margin-top: 15px; } .pr-anchor { margin-top: 22px; height: 39px; }
.pr-size { margin-top: 12px; } .pr-height { margin-top: 15px; }
.l-main { width: 99px; flex: none; white-space: nowrap; }
.l-sub { width: 54px; flex: none; }
.l-anchor { width: 90px; flex: none; }
.l-dim { width: 92px; flex: none; }
.shuffle { width: 28px; height: 26px; margin-right: 28px; flex: none; display: block; }
.axis { width: 26px; height: 26px; margin-right: 12px; }
.id-field {
  margin-left: 57px; width: 463px; height: 38px; background: #666; border-radius: 3px;
  display: flex; align-items: center; padding: 1px 0 0 4px;
}
.spin-pos { width: 118px; height: 36px; }
.spin-pos .spin-value { width: 93px; }
.spin-size { width: 109px; height: 37px; }
.spin-size .spin-value { width: 85px; }
.select-unit { width: 123px; height: 38px; margin-left: 13px; padding-right: 11px; }
.select-unit-size { margin-left: 13px; }
.anchor { display: grid; grid-template-columns: repeat(3, 12px); grid-auto-rows: 12px; gap: 2px; }
.anchor i { background: #bdbdbd; display: block; }
.anchor .on { background: #fff; }
.link { width: 28px; height: 28px; margin-left: 23px; }

.table-wrap { position: relative; margin-left: 21px; width: 598px; }
table.data {
  width: 598px; border-collapse: collapse; table-layout: fixed; border: 2px solid #aaa; border-top-color: #999;
}
.c1 { width: 152px; } .c2 { width: 148px; } .c3 { width: 148px; } .c4 { width: 150px; }
table.data th {
  height: 41px; background: #333; font-weight: 700; font-size: 22px; color: #fff; padding: 0;
  border: 2px solid #999; border-top: none; line-height: 1;
}
table.data td {
  height: 41px; background: #666; padding: 1px 0 0 8px; border: 2px solid #aaa; white-space: nowrap;
  color: #eee; font-size: 21.5px; line-height: 1; overflow: hidden; vertical-align: middle;
}
table.data td.cell-multi { vertical-align: top; padding-top: 0; }
.multi { height: 47px; overflow: hidden; line-height: 26px; margin: -7px 0 -8px; }
.grip {
  position: absolute; left: -17px; width: 17px; height: 39px; border-radius: 5px 0 0 5px;
  background: radial-gradient(circle, #8d929a 0 1.6px, transparent 1.8px) 2px 2px / 5px 5.500px #eef0f4;
  border: 1px solid #888;
}
.grip-1 { top: 42px; } .grip-2 { top: 83px; }
.row-btn {
  position: absolute; left: 598px; width: 26px; height: 39px; background: #f0f2f6; border: 1px solid #999; border-left: none;
  border-radius: 0 6px 6px 0; display: flex; align-items: center; justify-content: center;
}
.rb-1 { top: 42px; } .rb-2 { top: 83px; } .rb-3 { top: 124px; } .rb-m { top: 42px; }

.vscroll-props {
  width: 22px; height: 1101px; margin-left: 16px; border: none; background: #383838; flex: none; padding-left: 0;
}
.vscroll-props .sb-btn { width: 22px; height: 22px; }
.sb-thumb-props { width: 22px; height: 1026px; }

/* footer */
.footer { flex: 1; display: flex; justify-content: flex-end; padding: 17px 20px 0 0; }
.btn-close { width: 134px; height: 38px; }
```
